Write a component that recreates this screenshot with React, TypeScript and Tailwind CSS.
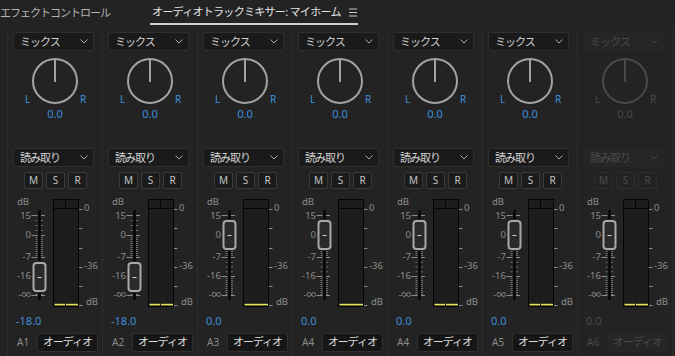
import React from "react";

type Channel = { name: string; gain: string; level: number; stereo: boolean; disabled?: boolean };

const channels: Channel[] = [
  { name: "A1", gain: "-18.0", level: 81, stereo: true },
  { name: "A2", gain: "-18.0", level: 81, stereo: true },
  { name: "A3", gain: "0.0", level: 39, stereo: false },
  { name: "A4", gain: "0.0", level: 39, stereo: false },
  { name: "A4", gain: "0.0", level: 39, stereo: true },
  { name: "A5", gain: "0.0", level: 39, stereo: true },
  { name: "A6", gain: "0.0", level: 39, stereo: true, disabled: true },
];

function Select({ label, disabled }: { label: string; disabled?: boolean }) {
  return (
    <div
      className={`ml-[5px] flex h-[19px] w-[81px] items-center justify-between rounded-[2px] border pl-[6px] pr-[5px] ${
        disabled ? "border-[#262626] bg-[#262626] text-[#4a4a4a]" : "border-[#2f2f2f] bg-[#1a1a1a] text-[#d2d2d2]"
      }`}
    >
      <span className="text-[11px] leading-none tracking-[-1px]">{label}</span>
      <svg width="8" height="5" viewBox="0 0 8 5" className={disabled ? "text-[#454545]" : "text-[#a8a8a8]"}>
        <path d="M0.5 0.5 L4 4 L7.5 0.5" fill="none" stroke="currentColor" strokeWidth="1" />
      </svg>
    </div>
  );
}

function Pan({ disabled }: { disabled?: boolean }) {
  const c = disabled ? "#484848" : "#a3a3a3";
  const txt = disabled ? "text-[#4a4a4a]" : "text-[#3f8fdc]";
  return (
    <div className="relative h-[72px]">
      <svg className="absolute left-[23px] top-[6px]" width="48" height="48" viewBox="0 0 48 48">
        <circle cx="24" cy="24" r="22" fill="none" stroke={c} strokeWidth="2" />
        <line x1="24" y1="2" x2="24" y2="25" stroke={c} strokeWidth="2" />
      </svg>
      <span className={`absolute left-[17px] top-[42px] text-[10px] leading-[12px] ${txt}`}>L</span>
      <span className={`absolute left-[72px] top-[42px] text-[10px] leading-[12px] ${txt}`}>R</span>
      <span className={`absolute left-0 right-0 top-[57px] text-center text-[11px] leading-[12px] ${txt}`}>0.0</span>
    </div>
  );
}

function MSR({ disabled }: { disabled?: boolean }) {
  return (
    <div className="ml-[16px] flex h-[17px] gap-[3px]">
      {["M", "S", "R"].map((k) => (
        <div
          key={k}
          className={`flex w-[19px] items-center justify-center rounded-[2px] border text-[10px] ${
            disabled ? "border-[#2e2e2e] text-[#4a4a4a]" : "border-[#3a3a3a] bg-[#1b1b1b] text-[#c4c4c4]"
          }`}
        >
          {k}
        </div>
      ))}
    </div>
  );
}

function ticks(from: number, to: number, step: number) {
  const out: number[] = [];
  for (let y = from + step; y < to - 0.5; y += step) out.push(y);
  return out;
}

function Fader({ level, stereo }: { level: number; stereo: boolean }) {
  const major = [19, 39, 61, 80, 99];
  const minor = [...ticks(19, 39, 5), ...ticks(39, 61, 2), ...ticks(61, 80, 4.75), ...ticks(80, 99, 2)];
  const right = [13, 32, 52, 71, 90, 109];
  const lab = "absolute text-[9.5px] leading-[8px] text-[#8c8c8c]";
  return (
    <div className="relative h-[116px]">
      <span className={`${lab} left-[9px] top-[2px]`}>dB</span>
      <span className={`${lab} right-[71px] top-[16px]`}>15</span>
      <span className={`${lab} right-[71px] top-[35px]`}>0</span>
      <span className={`${lab} right-[71px] top-[57px]`}>-7</span>
      <span className={`${lab} right-[71px] top-[76px]`}>-16</span>
      <span className={`${lab} right-[71px] top-[95px]`}>-∞</span>
      <span className={`${lab} left-[76px] top-[8px]`}>0</span>
      <span className={`${lab} left-[76px] top-[66px]`}>-36</span>
      <span className={`${lab} left-[78px] top-[102px]`}>dB</span>
      <svg className="absolute left-0 top-0" width="94" height="116" viewBox="0 0 94 116">
        {major.map((y) => (
          <g key={`m${y}`} stroke="#8a8a8a" strokeWidth="1">
            <line x1="23.5" y1={y + 0.5} x2="29.5" y2={y + 0.5} />
            <line x1="33" y1={y + 0.5} x2="37" y2={y + 0.5} />
          </g>
        ))}
        {minor.map((y) => (
          <g key={`n${y}`} stroke="#6e6e6e" strokeWidth="1">
            <line x1="27.5" y1={y + 0.5} x2="29.5" y2={y + 0.5} />
            <line x1="33" y1={y + 0.5} x2="35" y2={y + 0.5} />
          </g>
        ))}
        <rect x="30.3" y="14" width="2.4" height="90" fill="#050505" />
        <rect x="23.5" y={level - 16} width="16" height="32" rx="4" fill="#232323" />
        <rect x="25.5" y={level - 14} width="12" height="28" rx="3" fill="#2a2a2a" stroke="#a8a8a8" strokeWidth="2" />
        <line x1="29.5" y1={level + 0.5} x2="33.5" y2={level + 0.5} stroke="#d0d0d0" strokeWidth="1" />
        <rect x="45.5" y="3.5" width="25" height="107" fill="#1c1c1c" stroke="#050505" strokeWidth="1" />
        <line x1="45.5" y1="12.5" x2="70.5" y2="12.5" stroke="#050505" strokeWidth="1" />
        {stereo && <line x1="57.5" y1="3.5" x2="57.5" y2="12.5" stroke="#050505" strokeWidth="1" />}
        {stereo ? (
          <>
            <rect x="46.5" y="107.8" width="10.5" height="1.6" fill="#e6e65a" />
            <rect x="58" y="107.8" width="12" height="1.6" fill="#e6e65a" />
          </>
        ) : (
          <rect x="46.5" y="107.8" width="23.5" height="1.6" fill="#e6e65a" />
        )}
        {right.map((y) => (
          <line key={`r${y}`} x1="71" y1={y + 0.5} x2="74.5" y2={y + 0.5} stroke="#8a8a8a" strokeWidth="1" />
        ))}
      </svg>
    </div>
  );
}

function Strip({ ch }: { ch: Channel }) {
  const d = ch.disabled;
  return (
    <div className="flex w-[95px] shrink-0 flex-col border-l border-[#2d2d2d]">
      <div className="mt-px">
        <Select label="ミックス" disabled={d} />
      </div>
      <Pan disabled={d} />
      <div className="mt-[25px]">
        <Select label="読み取り" disabled={d} />
      </div>
      <div className="mt-[5px]">
        <MSR disabled={d} />
      </div>
      <div className="mt-[7px]">
        <Fader level={ch.level} stereo={ch.stereo} />
      </div>
      <div className={`ml-[8px] mt-[3px] text-[11px] leading-[12px] ${d ? "text-[#4a4a4a]" : "text-[#3f8fdc]"}`}>
        {ch.gain}
      </div>
      <div className="mt-[6px] flex h-[19px] items-center">
        <span className={`ml-[9px] w-[20px] text-[10px] ${d ? "text-[#4a4a4a]" : "text-[#8a8a8a]"}`}>{ch.name}</span>
        <div
          className={`flex h-[19px] w-[61px] items-center justify-center rounded-[2px] border text-[11px] tracking-[-1px] ${
            d ? "border-[#262626] bg-[#262626] text-[#4a4a4a]" : "border-[#2f2f2f] bg-[#161616] text-[#dcdcdc]"
          }`}
        >
          オーディオ
        </div>
      </div>
    </div>
  );
}

export default function App() {
  return (
    <div className="h-[356px] w-[675px] select-none overflow-hidden bg-[#232323] font-['Noto_Sans','Noto_Sans_CJK_JP',sans-serif]">
      <header className="flex h-[31px] items-start">
        <div className="flex h-[25px] w-[150px] items-center pt-px text-[11px] tracking-[-1px] text-[#b4b4b4]">
          エフェクトコントロール
        </div>
        <div className="flex h-[25px] w-[208px] items-center border-b-2 border-[#cfcfcf] pl-[2px] pt-px text-[11px] text-[#e4e4e4]">
          <span className="tracking-[-0.7px]">オーディオトラックミキサー: マイホーム</span>
          <svg className="ml-auto mr-px mt-px" width="8" height="9" viewBox="0 0 8 9">
            <g stroke="#c8c8c8" strokeWidth="1">
              <line x1="0" y1="1" x2="8" y2="1" />
              <line x1="0" y1="4.5" x2="8" y2="4.5" />
              <line x1="0" y1="8" x2="8" y2="8" />
            </g>
          </svg>
        </div>
      </header>
      <div className="flex h-[325px]">
        <div className="w-[7px] shrink-0" />
        {channels.map((ch, i) => (
          <Strip key={i} ch={ch} />
        ))}
        <div className="flex-1 border-l border-[#2d2d2d]" />
      </div>
    </div>
  );
}
